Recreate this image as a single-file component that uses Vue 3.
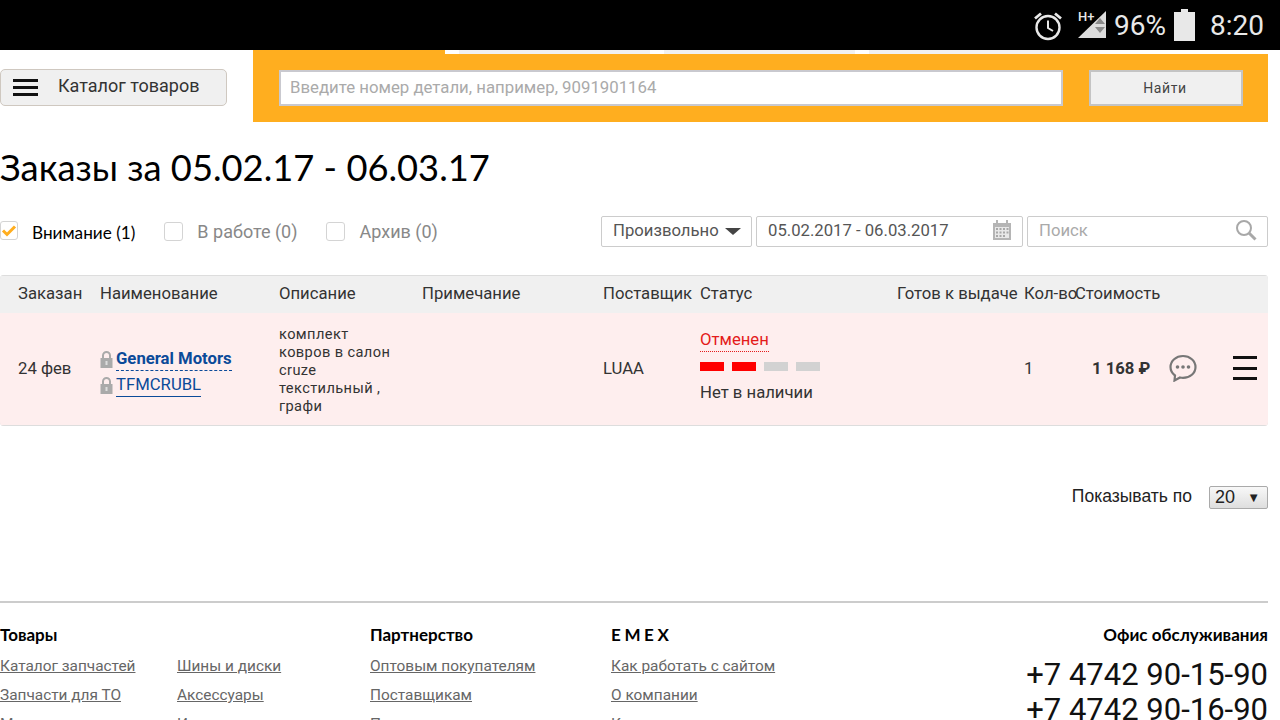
<template>
  <div class="page">
    <div class="status-bar">
      <svg class="alarm" width="30" height="30" viewBox="0 0 30 30" fill="none" stroke="#e8e8e8">
        <circle cx="15" cy="16.500" r="11.500" stroke-width="2.400" />
        <path d="M15 9.500v7.500l5 3" stroke-width="2" />
        <path d="M2 7.500l6-5M28 7.500l-6-5" stroke-width="2.800" />
      </svg>
      <div class="signal">
        <svg width="29" height="28" viewBox="0 0 29 28">
          <path d="M0 27L28 0v27z" fill="#dcdcdc" />
          <path d="M17 13l5-6 5 6zM17 16h10l-5 6z" fill="#8a8a8a" />
        </svg>
        <span class="hplus">H+</span>
      </div>
      <span class="battery-text">96%</span>
      <svg class="battery" width="21" height="32" viewBox="0 0 21 32">
        <path d="M7 0h7v3h7v29H0V3h7z" fill="#e8e8e8" />
      </svg>
      <span class="clock">8:20</span>
    </div>

    <div class="top">
      <button class="catalog-btn">
        <span class="burger"><i></i><i></i><i></i></span>
        <span>Каталог товаров</span>
      </button>
      <div class="search-wrap">
        <div class="tabs">
          <div class="tab active"></div>
          <div class="tab"></div>
          <div class="tab"></div>
          <div class="tab"></div>
        </div>
        <div class="search-panel">
          <div class="search-input">Введите номер детали, например, 9091901164</div>
          <button class="search-btn">Найти</button>
        </div>
      </div>
    </div>

    <h1>Заказы за 05.02.17 - 06.03.17</h1>

    <div class="filters">
      <label class="check on">
        <span class="box">
          <svg width="16" height="14" viewBox="0 0 16 14" fill="none"><path d="M2 6.500l4 4 8-8" stroke="#ffae1f" stroke-width="3" /></svg>
        </span>
        <span class="check-label">Внимание (1)</span>
      </label>
      <label class="check">
        <span class="box"></span>
        <span class="check-label">В работе (0)</span>
      </label>
      <label class="check">
        <span class="box"></span>
        <span class="check-label">Архив (0)</span>
      </label>
      <div class="filter-right">
        <div class="field period">Произвольно <span class="caret"></span></div>
        <div class="field dates">
          <span>05.02.2017 - 06.03.2017</span>
          <svg width="20" height="20" viewBox="0 0 20 20">
            <path d="M1 3h18v17H1z" fill="#b5b5b5" />
            <path d="M4 0h2v4H4zM14 0h2v4h-2z" fill="#b5b5b5" />
            <path d="M3 7h14v11H3z" fill="#e8e8e8" />
            <path d="M4 8h2v2H4zM7.500 8h2v2h-2zM11 8h2v2h-2zM14.500 8h2v2h-2zM4 11.500h2v2H4zM7.500 11.500h2v2h-2zM11 11.500h2v2h-2zM14.500 11.500h2v2h-2zM4 15h2v2H4zM7.500 15h2v2h-2zM11 15h2v2h-2z" fill="#a8a8a8" />
          </svg>
        </div>
        <div class="field find">
          <span>Поиск</span>
          <svg width="22" height="22" viewBox="0 0 22 22" fill="none" stroke="#a8a8a8">
            <circle cx="9" cy="9" r="7" stroke-width="2" />
            <path d="M14 14l6.500 6.500" stroke-width="3" />
          </svg>
        </div>
      </div>
    </div>

    <div class="orders">
      <div class="orders-head">
        <div v-for="col in columns" :key="col">{{ col }}</div>
      </div>
      <div class="orders-row">
        <div>24 фев</div>
        <div class="name-cell">
          <div class="name-line">
            <svg class="lock" width="13" height="17" viewBox="0 0 13 17">
              <path d="M3 7V4.500a3.500 3.500 0 0 1 7 0V7" fill="none" stroke="#aaa" stroke-width="2" />
              <path d="M0.500 7h12v10H0.500z" fill="#aaa" />
              <path d="M5.500 10h2v4h-2z" fill="#ddd" />
            </svg>
            <a class="brand">General Motors</a>
          </div>
          <div class="name-line">
            <svg class="lock" width="13" height="17" viewBox="0 0 13 17">
              <path d="M3 7V4.500a3.500 3.500 0 0 1 7 0V7" fill="none" stroke="#aaa" stroke-width="2" />
              <path d="M0.500 7h12v10H0.500z" fill="#aaa" />
              <path d="M5.500 10h2v4h-2z" fill="#ddd" />
            </svg>
            <a class="part">TFMCRUBL</a>
          </div>
        </div>
        <div class="descr">комплект ковров в салон cruze текстильный , графи</div>
        <div></div>
        <div>LUAA</div>
        <div class="status-cell">
          <span class="status-name">Отменен</span>
          <div class="steps">
            <i v-for="s in steps" :key="s.id" :class="{ done: s.done }"></i>
          </div>
          <span>Нет в наличии</span>
        </div>
        <div></div>
        <div>1</div>
        <div class="price-cell">
          <b class="price">1 168 ₽</b>
          <svg class="chat" width="28" height="28" viewBox="0 0 28 28">
            <path d="M14 2C7 2 1.500 6.900 1.500 13c0 3.500 1.800 6.500 4.500 8.500L5.500 26.500l5.500-3c1 .2 2 .4 3 .4 7 0 12.500-4.800 12.500-10.900S21 2 14 2z" fill="none" stroke="#777" stroke-width="2.200" />
            <circle cx="8.500" cy="13" r="1.800" fill="#777" />
            <circle cx="14" cy="13" r="1.800" fill="#777" />
            <circle cx="19.500" cy="13" r="1.800" fill="#777" />
          </svg>
          <span class="row-menu"><i></i><i></i><i></i></span>
        </div>
      </div>
    </div>

    <div class="pager">
      <span class="pager-label">Показывать по</span>
      <div class="page-select">20 <span>▼</span></div>
    </div>

    <footer>
      <div class="foot-col goods">
        <h4>Товары</h4>
        <div class="goods-links">
          <a v-for="l in goodsLinks" :key="l">{{ l }}</a>
        </div>
      </div>
      <div class="foot-col partners">
        <h4>Партнерство</h4>
        <a v-for="l in partnerLinks" :key="l">{{ l }}</a>
      </div>
      <div class="foot-col emex">
        <h4 class="wide">EMEX</h4>
        <a v-for="l in emexLinks" :key="l">{{ l }}</a>
      </div>
      <div class="foot-col office">
        <h4>Офис обслуживания</h4>
        <div class="phone">+7 4742 90-15-90</div>
        <div class="phone">+7 4742 90-16-90</div>
      </div>
    </footer>
  </div>
</template>

<script setup>
const columns = ['Заказан', 'Наименование', 'Описание', 'Примечание', 'Поставщик', 'Статус', 'Готов к выдаче', 'Кол-во', 'Стоимость']

const steps = [
  { id: 1, done: true },
  { id: 2, done: true },
  { id: 3, done: false },
  { id: 4, done: false }
]

const goodsLinks = ['Каталог запчастей', 'Шины и диски', 'Запчасти для ТО', 'Аксессуары', 'Масла и автохимия', 'Инструменты']
const partnerLinks = ['Оптовым покупателям', 'Поставщикам', 'Партнерам']
const emexLinks = ['Как работать с сайтом', 'О компании', 'Контакты']
</script>

<style>
html, body {
  margin: 0;
  background: #fff;
  overflow: hidden;
}
</style>

<style scoped>
.page {
  width: 1280px;
  height: 720px;
  overflow: hidden;
  font-family: Roboto, "Liberation Sans", sans-serif;
  font-size: 16.7px;
  color: #333;
  background: #fff;
}

.status-bar {
  height: 50px;
  background: #000;
  color: #e8e8e8;
  display: flex;
  align-items: center;
  justify-content: flex-end;
  padding-right: 16px;
  font-size: 28px;
}

.alarm {
  margin-right: 15px;
  margin-top: 1px;
}

.signal {
  position: relative;
  width: 29px;
  height: 28px;
  margin-right: 7px;
  margin-top: -1px;
}

.hplus {
  position: absolute;
  left: 0;
  top: -1px;
  font-size: 13px;
  line-height: 14px;
  font-weight: 500;
}

.battery {
  margin: 0 15px 0 8px;
}

.top {
  display: flex;
  height: 72px;
}

.catalog-btn {
  width: 227px;
  height: 37px;
  margin-top: 19px;
  box-sizing: border-box;
  display: flex;
  align-items: center;
  gap: 20px;
  padding: 0 0 5px 12px;
  background: #f0f0f0;
  border: 1px solid #cfc8c0;
  border-radius: 5px;
  font-family: inherit;
  font-size: 18px;
  color: #333;
}

.burger {
  display: flex;
  flex-direction: column;
  gap: 4px;
  width: 25px;
  margin-top: 5px;
}

.burger i {
  height: 3px;
  background: #111;
}

.search-wrap {
  margin-left: 26px;
  width: 1015px;
}

.tabs {
  display: flex;
  height: 4px;
  gap: 14px;
}

.tab {
  width: 191px;
  background: #f1f1f1;
}

.tab.active {
  width: 192px;
  background: #ffae1f;
}

.search-panel {
  height: 68px;
  background: #ffae1f;
  display: flex;
  align-items: center;
  padding: 0 25px 0 26px;
  gap: 26px;
}

.search-input {
  flex: 1;
  height: 36px;
  box-sizing: border-box;
  background: #fff;
  border: 2px solid #c9c9cf;
  padding-left: 9px;
  line-height: 30px;
  color: #aaa;
  font-size: 16.8px;
  white-space: nowrap;
}

.search-btn {
  width: 154px;
  height: 36px;
  padding: 0 2px 0 0;
  background: #f0f0f0;
  border: 2px solid #c4c4c4;
  font-family: inherit;
  font-size: 14px;
  letter-spacing: 0.6px;
  color: #444;
}

h1 {
  margin: 23px 0 0;
  font-family: Lato, sans-serif;
  font-weight: 400;
  font-size: 36.3px;
  line-height: 44px;
  color: #000;
}

.filters {
  display: flex;
  align-items: center;
  gap: 29px;
  height: 36px;
  margin-top: 24px;
}

.check {
  display: flex;
  align-items: center;
  color: #888;
  font-size: 18px;
}

.box {
  width: 19px;
  height: 19px;
  box-sizing: border-box;
  border: 1px solid #d4d4d4;
  border-radius: 3px;
  display: flex;
  align-items: center;
  justify-content: center;
  margin-right: 14px;
}

.check.on {
  color: #000;
  font-family: Lato, sans-serif;
  font-size: 17.2px;
  margin-top: 2px;
}

.check.on .box {
  width: 18px;
  margin-top: -3px;
}

.filter-right {
  margin-left: auto;
  margin-right: 12px;
  display: flex;
  gap: 4px;
}

.field {
  height: 31px;
  box-sizing: border-box;
  border: 1px solid #ccc;
  border-radius: 2px;
  display: flex;
  align-items: center;
  justify-content: space-between;
  padding: 0 10px 2px 11px;
  color: #555;
}

.period {
  width: 151px;
}

.dates {
  width: 267px;
}

.find {
  width: 241px;
  color: #aaa;
}

.caret {
  width: 0;
  height: 0;
  border-left: 8px solid transparent;
  border-right: 8px solid transparent;
  border-top: 7px solid #444;
  margin-top: 3px;
}

.orders {
  margin-top: 26px;
  width: 1268px;
  border-radius: 4px;
  overflow: hidden;
  box-shadow: inset 0 0 0 1px #ddd;
}

.orders-head,
.orders-row {
  display: grid;
  grid-template-columns: 82px 179px 143px 181px 97px 197px 127px 51px 193px;
  padding-left: 18px;
  align-items: center;
}

.orders-head {
  height: 38px;
  box-sizing: border-box;
  padding-bottom: 3px;
  background: #f0f0f0;
  border-top: 1px solid #ddd;
  white-space: nowrap;
}

.orders-row {
  height: 113px;
  padding-bottom: 2px;
  box-sizing: border-box;
  background: #feeeee;
  border-bottom: 1px solid #ddd;
}

.name-cell {
  padding-top: 8px;
}

.name-line {
  display: flex;
  align-items: center;
  gap: 3px;
  height: 26px;
}

.brand {
  color: #0b4a99;
  font-weight: 700;
  border-bottom: 1px dashed #0b4a99;
  line-height: 22px;
}

.part {
  color: #0b4a99;
  border-bottom: 1px solid #0b4a99;
  line-height: 22px;
}

.descr {
  font-size: 14.6px;
  line-height: 18px;
  letter-spacing: 0.4px;
  width: 118px;
  padding-top: 4px;
}

.status-cell {
  display: flex;
  flex-direction: column;
  align-items: flex-start;
  padding-bottom: 6px;
}

.status-name {
  color: #e41b1b;
  border-bottom: 1px dotted #e41b1b;
  line-height: 22px;
}

.steps {
  display: flex;
  gap: 8px;
  margin: 10px 0 12px;
}

.steps i {
  width: 24px;
  height: 9px;
  background: #d2d2d2;
}

.steps i.done {
  background: #ff0000;
}

.price-cell {
  display: flex;
  align-items: center;
  padding-left: 17px;
}

.price {
  color: #333;
  width: 64px;
  white-space: nowrap;
}

.chat {
  margin-left: 13px;
  flex-shrink: 0;
}

.row-menu {
  display: flex;
  flex-direction: column;
  gap: 7.500px;
  width: 24px;
  margin-left: 36px;
  flex-shrink: 0;
}

.row-menu i {
  height: 3px;
  background: #111;
}

.pager {
  display: flex;
  justify-content: flex-end;
  align-items: center;
  gap: 17px;
  width: 1268px;
  margin-top: 60px;
  font-family: "Liberation Sans", sans-serif;
  font-size: 17.5px;
  color: #222;
}

.pager-label {
  padding-bottom: 2px;
}

.page-select {
  width: 59px;
  height: 23px;
  box-sizing: border-box;
  border: 1px solid #aaa;
  border-radius: 2px;
  background: linear-gradient(#f8f8f8, #dedede);
  display: flex;
  justify-content: space-between;
  align-items: center;
  padding: 0 7px 0 5px;
  font-size: 18px;
}

.page-select span {
  font-size: 13px;
}

footer {
  width: 1268px;
  margin-top: 92px;
  border-top: 2px solid #ccc;
  padding-top: 21px;
  display: flex;
}

.foot-col {
  display: flex;
  flex-direction: column;
  align-items: flex-start;
}

.foot-col h4 {
  margin: 0 0 11px;
  font-family: Lato, sans-serif;
  font-size: 17px;
  line-height: 22px;
  font-weight: 700;
  color: #000;
}

.foot-col h4.wide {
  letter-spacing: 3.600px;
}

.foot-col a {
  font-size: 15.4px;
  line-height: 19px;
  margin-bottom: 10px;
  color: #666;
  text-decoration: underline;
  white-space: nowrap;
}

.goods {
  width: 370px;
}

.goods-links {
  display: grid;
  grid-template-columns: 177px 1fr;
}

.partners {
  width: 241px;
}

.office {
  margin-left: auto;
  align-items: flex-end;
}

.phone {
  font-size: 31px;
  line-height: 35px;
  color: #111;
  white-space: nowrap;
}
</style>
